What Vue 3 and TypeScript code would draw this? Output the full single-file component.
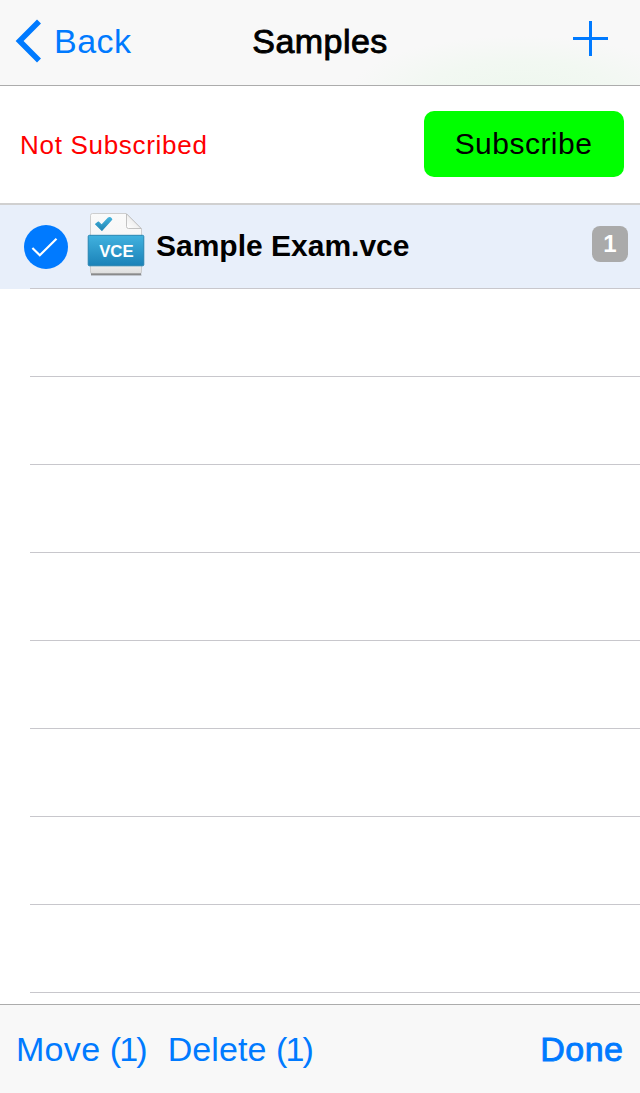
<script setup lang="ts">
import { ref } from 'vue'

interface Exam {
  name: string
  count: number
}

const exams = ref<Exam[]>([{ name: 'Sample Exam.vce', count: 1 }])
const selected = ref<number>(1)
const emptyRows = 8
</script>

<template>
  <div class="screen">
    <header class="nav">
      <button class="back">
        <svg class="chevron" width="28" height="46" viewBox="0 0 28 46">
          <path d="M25 3.6 L5.6 23 L25 42.4" fill="none" stroke="#007aff" stroke-width="5.6" />
        </svg>
        <span class="back-label">Back</span>
      </button>
      <h1 class="title">Samples</h1>
      <button class="add" aria-label="Add">
        <svg width="35" height="35" viewBox="0 0 35 35" shape-rendering="crispEdges">
          <path d="M16 0h3v35h-3z M0 16h35v3H0z" fill="#007aff" />
        </svg>
      </button>
    </header>

    <section class="subscription">
      <span class="status">Not Subscribed</span>
      <button class="subscribe">Subscribe</button>
    </section>

    <ul class="list">
      <li v-for="exam in exams" :key="exam.name" class="row exam">
        <svg class="check" width="44" height="44" viewBox="0 0 44 44">
          <circle cx="22" cy="22" r="22" fill="#007aff" />
          <path d="M8.4 23 L15.8 30.2 L32.5 13.7" fill="none" stroke="#fff" stroke-width="2.2" />
        </svg>
        <svg class="file" width="60" height="66" viewBox="0 0 60 66">
          <defs>
            <linearGradient id="paper" x1="0" y1="0" x2="0" y2="1">
              <stop offset="0" stop-color="#fafafa" />
              <stop offset="0.8" stop-color="#f3f3f3" />
              <stop offset="1" stop-color="#dddddd" />
            </linearGradient>
            <linearGradient id="band" x1="0" y1="0" x2="0" y2="1">
              <stop offset="0" stop-color="#41b2df" />
              <stop offset="1" stop-color="#1b82b8" />
            </linearGradient>
            <linearGradient id="tick" x1="0" y1="0" x2="0" y2="1">
              <stop offset="0" stop-color="#43b2dc" />
              <stop offset="1" stop-color="#2085b4" />
            </linearGradient>
            <linearGradient id="fold" x1="0" y1="1" x2="1" y2="0">
              <stop offset="0" stop-color="#ffffff" />
              <stop offset="1" stop-color="#dedede" />
            </linearGradient>
          </defs>
          <path d="M5 62.8 H55.5 V65 H5z" fill="#888" opacity=".4" />
          <path d="M6.5 2.5 H40 L55.5 18 V61 Q55.5 63 53.5 63 H6.5 Q4.5 63 4.5 61 V4.5 Q4.5 2.5 6.5 2.5z" fill="url(#paper)" stroke="#c4c4c4" stroke-width="0.8" />
          <path d="M5 63.2 H55" stroke="#777" stroke-width="1.2" />
          <path d="M40.5 2.8 V15.5 Q40.5 17.5 42.5 17.5 H55.2z" fill="url(#fold)" stroke="#b4b4b4" stroke-width="0.8" />
          <path d="M9.6 13.2 L12.4 11 L15.6 14.2 L22.4 7 Q24.6 5.8 25.8 8.4 L15.9 19.3z" fill="url(#tick)" stroke="url(#tick)" stroke-width="1.1" stroke-linejoin="round" />
          <rect x="2.2" y="24.3" width="55.6" height="30.5" rx="1.2" fill="url(#band)" stroke="#207fac" stroke-width="0.9" />
          <text x="30.4" y="45.8" text-anchor="middle" class="file-type">VCE</text>
        </svg>
        <span class="name">{{ exam.name }}</span>
        <span class="badge">{{ exam.count }}</span>
      </li>
      <li v-for="n in emptyRows" :key="n" class="row"></li>
    </ul>

    <footer class="toolbar">
      <button class="action move"><span class="word">Move</span><span class="count">({{ selected }})</span></button>
      <button class="action delete"><span class="word">Delete</span><span class="count">({{ selected }})</span></button>
      <button class="action done">Done</button>
    </footer>
  </div>
</template>

<style>
body {
  margin: 0;
  background: #fff;
}
</style>

<style scoped>
.screen {
  display: flex;
  flex-direction: column;
  width: 640px;
  height: 1093px;
  overflow: hidden;
  box-sizing: border-box;
  background: #fff;
  font-family: "Liberation Sans", Arial, sans-serif;
}
button {
  padding: 0;
  border: 0;
  background: none;
  color: #007aff;
  font: inherit;
}
svg {
  display: block;
  flex: none;
}
.nav {
  display: grid;
  grid-template-columns: 200px 1fr 200px;
  height: 86px;
  flex: none;
  box-sizing: border-box;
  border-bottom: 1px solid #acacac;
  background: radial-gradient(ellipse 170px 56px at 520px 92px, #eef7ee 0%, #f2f8f2 55%, #f8f8f8 100%) #f8f8f8;
  font-size: 34px;
  line-height: 82px;
}
.back {
  display: flex;
  align-items: flex-start;
  padding-left: 14px;
}
.chevron {
  margin-top: 18px;
}
.back-label {
  margin-left: 12px;
  letter-spacing: 0.5px;
}
.title {
  margin: 0;
  color: #000;
  font-size: 34px;
  font-weight: 400;
  letter-spacing: 0.45px;
  text-align: center;
  -webkit-text-stroke: 0.9px #000;
}
.add {
  justify-self: end;
  align-self: start;
  margin: 21px 32px 0 0;
}
.subscription {
  display: flex;
  justify-content: space-between;
  align-items: flex-start;
  height: 119px;
  flex: none;
  box-sizing: border-box;
  padding: 25px 16px 0 20px;
  border-bottom: 2px solid #d0d0d0;
}
.status {
  color: #f00;
  font-size: 26px;
  line-height: 68px;
  letter-spacing: 0.7px;
}
.subscribe {
  width: 200px;
  height: 66px;
  padding-right: 1px;
  border-radius: 10px;
  background: #0f0;
  color: #000;
  font-size: 30px;
  line-height: 66px;
  letter-spacing: 0.48px;
}
.list {
  flex: 1;
  margin: 0;
  padding: 0;
  list-style: none;
}
.row {
  height: 88px;
  box-sizing: border-box;
  background: linear-gradient(#c8c7cc, #c8c7cc) 30px 100% / 610px 1px no-repeat;
}
.exam {
  display: flex;
  align-items: flex-start;
  height: 84px;
  padding: 0 12px 0 24px;
  background: linear-gradient(#c8c7cc, #c8c7cc) 30px 100% / 610px 1px no-repeat, #e8effa;
}
.check {
  margin-top: 20px;
}
.file {
  margin: 6px 0 0 18px;
}
.file-type {
  fill: #fff;
  font-size: 16.8px;
  font-weight: 700;
}
.name {
  flex: 1;
  margin-left: 10px;
  font-size: 30px;
  font-weight: 700;
  line-height: 82px;
}
.badge {
  width: 36px;
  height: 36px;
  margin-top: 21px;
  border-radius: 8px;
  background: #aaa;
  color: #fff;
  font-size: 24px;
  font-weight: 700;
  line-height: 36px;
  text-align: center;
}
.toolbar {
  display: flex;
  height: 89px;
  flex: none;
  box-sizing: border-box;
  padding: 0 16.5px 0 16px;
  border-top: 1px solid #acacac;
  background: #f8f8f8;
  font-size: 34px;
  line-height: 88px;
}
.action {
  display: flex;
}
.word {
  letter-spacing: 0.3px;
}
.count {
  margin-left: 9.5px;
  letter-spacing: -1.9px;
}
.delete {
  margin-left: 22px;
}
.delete .word {
  letter-spacing: 0.1px;
}
.done {
  margin-left: auto;
  letter-spacing: 0.5px;
  -webkit-text-stroke: 0.9px #007aff;
}
</style>
